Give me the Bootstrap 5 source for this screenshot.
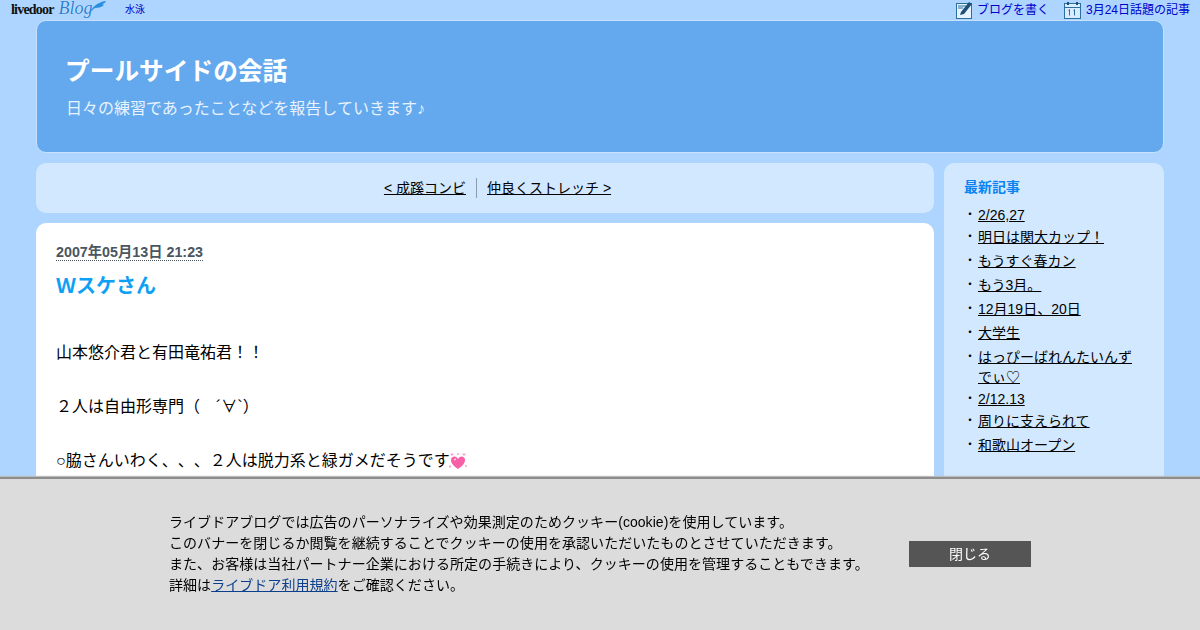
<!DOCTYPE html>
<html lang="ja">
<head>
<meta charset="utf-8">
<title>プールサイドの会話</title>
<link href="https://cdn.jsdelivr.net/npm/bootstrap@5.3.0/dist/css/bootstrap.min.css" rel="stylesheet">
<style>
html,body{height:630px;overflow:hidden}
body{background:#add5ff;color:#000;font-family:"Liberation Sans","Noto Sans CJK JP",sans-serif;font-size:15px;line-height:24px;text-spacing-trim:space-all}
a{color:#000}
.topbar{height:20px;font-size:12px;line-height:20px;padding:0 10px 0 11px}
.topbar a{color:#00c;text-decoration:none}
.logo-mark{width:92px;height:20px;line-height:17px;white-space:nowrap}
.logo-live{font-family:"Liberation Serif",serif;font-weight:700;font-size:14px;color:#111;letter-spacing:-.8px}
.logo-blog{font-family:"Liberation Serif",serif;font-style:italic;font-size:18px;color:#2b7fd0;margin-left:5px;text-shadow:0 0 1px #fff}
.logo-wing{margin-left:-5px;margin-top:1px}
.cat-link{font-size:10px;margin-left:22px}
.tool-link{gap:4px;font-size:12px;margin-left:15px}
.wrap{padding:0 36px}
.hero{height:133px;background:#64a9ed;border:1px solid #c9e2fb;border-radius:10px;padding:31px 28px 0;color:#fff}
.hero-title{font-size:24.7px;line-height:40px;font-weight:700;margin:0}
.hero-sub{font-size:16px;line-height:34px;margin:0 0 0 1px;color:#e8f3ff}
.cols{gap:10px;margin-top:10px}
.main-col{width:898px}
.side-col{width:220px;height:400px;background:#d2e8ff;border-radius:10px;padding:12px 20px}
.pager{height:50px;background:#d2e8ff;border-radius:10px;font-size:14px;padding-left:25px}
.pager a:first-child{padding-right:10px;border-right:1px solid #8a9bab;line-height:20px}
.pager a:last-child{padding-left:10px;line-height:20px}
.post{margin-top:10px;background:#fff;border-radius:10px;padding:18px 20px;height:400px}
.post-date{font-size:14.3px;line-height:22px;font-weight:700;color:#4a5560;margin:0}
.post-date span{border-bottom:1px dotted #4a5560}
.post-title{font-size:20px;line-height:30px;font-weight:700;color:#0ea0f5;margin:8px 0 38px}
.post-body{font-size:16px;line-height:27px}
.heart{margin-top:1px;margin-left:-1px}
.side-title{font-size:14px;line-height:24px;font-weight:700;color:#0a84f0;margin:0 0 6px}
.side-list{list-style:none;margin:0;padding:0;font-size:14px;line-height:20px}
.side-list li{position:relative;padding-left:14px;margin-bottom:4px}
.side-list li.tight{margin-bottom:2px}
.side-list li::before{content:"・";position:absolute;left:0;top:0;font-size:12px}
.cookie{position:fixed;left:0;right:0;bottom:0;height:153px;background:#dcdcdc;border-top:2px solid #8d8d8d;box-shadow:0 -1px 1px #bbb;padding-top:33px}
.cookie-inner{width:862px;margin-left:169px;gap:46px}
.cookie-text{width:694px;font-size:14px;line-height:21px;margin:0;white-space:nowrap;letter-spacing:.05px}
.cookie-text a{color:#0b3f8c}
.cookie-btn{width:122px;height:26px;margin-top:29px;background:#555;color:#fff;border:0;border-radius:0;font-size:14px;line-height:26px;padding:0}
.cookie-btn:hover{background:#555;color:#fff}
</style>
</head>
<body>
<div class="topbar d-flex align-items-start justify-content-between">
  <div class="d-flex">
    <a class="logo-mark d-block" href="#"><span class="logo-live">livedoor</span><span class="logo-blog">Blog</span><svg width="18" height="14" viewBox="0 0 18 14" class="align-top logo-wing"><path d="M1 14C3 7 9 1 18 0c-1 2-2 3-4 3 1 0 1 1 2 1-2 2-5 3-9 3-2 1-4 3-6 7z" fill="#2b8fe0"/></svg></a>
    <a class="cat-link" href="#">水泳</a>
  </div>
  <div class="d-flex">
    <a class="tool-link d-flex align-items-center" href="#">
      <svg width="18" height="18" viewBox="0 0 18 18"><rect x="1.500" y="2.500" width="15" height="15" fill="#e8f3ff" stroke="#2a6f9e"/><path d="M3 5h8M3 7h5" stroke="#2a6f9e"/><path d="M5 14l1-3 8-10 3 2-8 10z" fill="#1d4f78"/></svg>
      <span>ブログを書く</span>
    </a>
    <a class="tool-link d-flex align-items-center" href="#">
      <svg width="18" height="18" viewBox="0 0 18 18"><rect x=".5" y="2.500" width="16" height="15" fill="#d8ebff" stroke="#2a6f9e"/><path d="M1 6.500h15" stroke="#2a6f9e"/><path d="M4 1v3M13 1v3" stroke="#1d4f78" stroke-width="2"/><path d="M5.500 8.500v6M10.500 8.500v6M4.500 9.500l1-1M9.500 9.500l1-1" stroke="#2a6f9e"/></svg>
      <span>3月24日話題の記事</span>
    </a>
  </div>
</div>
<div class="wrap">
  <header class="hero">
    <h1 class="hero-title">プールサイドの会話</h1>
    <p class="hero-sub">日々の練習であったことなどを報告していきます♪</p>
  </header>
  <div class="cols d-flex align-items-start">
    <main class="main-col">
      <nav class="pager d-flex align-items-center justify-content-center">
        <a href="#">&lt; 成蹊コンビ</a><a href="#">仲良くストレッチ &gt;</a>
      </nav>
      <article class="post">
        <p class="post-date"><span>2007年05月13日 21:23</span></p>
        <h2 class="post-title">Ｗスケさん</h2>
        <div class="post-body">
          山本悠介君と有田竜祐君！！<br><br>
          ２人は自由形専門（　´∀`）<br><br>
          ○脇さんいわく、、、２人は脱力系と緑ガメだそうです<svg width="18" height="18" viewBox="0 0 18 18" class="align-text-top heart"><path d="M9 16C3 12 2 9 2 7c0-4 5-5 7-1 2-4 7-3 7 1 0 2-1 5-7 9z" fill="#f95fa6"/><path d="M5 7l2-1" stroke="#fff"/><path d="M3 0v3M1.500 1.500h3M9 0v2M8 1h2M15 0v3M13.500 1.500h3M1 12v3M0 13.500h2M17 12v2M16 13h2" stroke="#f4a3d0"/></svg>
        </div>
      </article>
    </main>
    <aside class="side-col">
      <h3 class="side-title">最新記事</h3>
      <ul class="side-list">
        <li class="tight"><a href="#">2/26,27</a></li>
        <li><a href="#">明日は関大カップ！</a></li>
        <li><a href="#">もうすぐ春カン</a></li>
        <li><a href="#">もう3月。</a></li>
        <li><a href="#">12月19日、20日</a></li>
        <li><a href="#">大学生</a></li>
        <li class="tight"><a href="#">はっぴーばれんたいんずでぃ♡</a></li>
        <li class="tight"><a href="#">2/12.13</a></li>
        <li><a href="#">周りに支えられて</a></li>
        <li><a href="#">和歌山オープン</a></li>
      </ul>
    </aside>
  </div>
</div>
<div class="cookie">
  <div class="cookie-inner d-flex align-items-start">
    <p class="cookie-text">ライブドアブログでは広告のパーソナライズや効果測定のためクッキー(cookie)を使用しています。<br>このバナーを閉じるか閲覧を継続することでクッキーの使用を承認いただいたものとさせていただきます。<br>また、お客様は当社パートナー企業における所定の手続きにより、クッキーの使用を管理することもできます。<br>詳細は<a href="#">ライブドア利用規約</a>をご確認ください。</p>
    <button type="button" class="btn cookie-btn">閉じる</button>
  </div>
</div>
<script src="https://cdn.jsdelivr.net/npm/bootstrap@5.3.0/dist/js/bootstrap.bundle.min.js"></script>
</body>
</html>
